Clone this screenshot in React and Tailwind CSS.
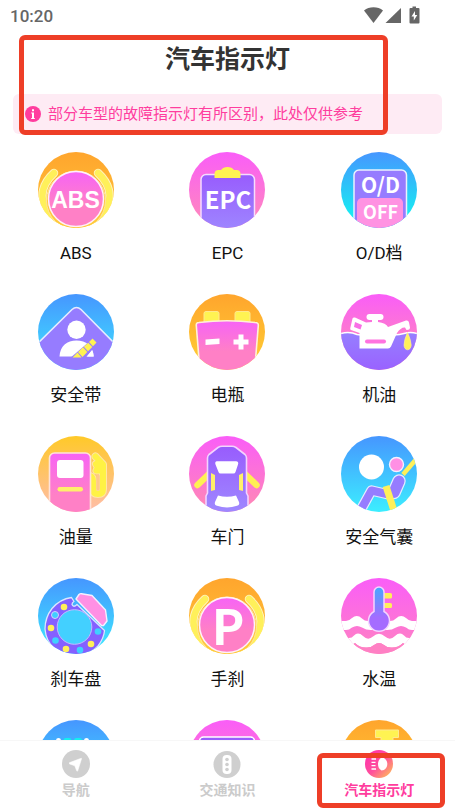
import React from "react";

const YELLOW = "#fff352";
const VIOLET = "#967cff";

function Disc({ id, from, to, children }) {
  return (
    <svg viewBox="0 0 76 76" className="size-[76px] shrink-0 overflow-visible" aria-hidden="true">
      <defs>
        <linearGradient id={`${id}-bg`} x1="0" y1="0" x2="0" y2="1">
          <stop offset="0" stopColor={from} />
          <stop offset="1" stopColor={to} />
        </linearGradient>
        <linearGradient id={`${id}-pink`} x1="0" y1="0" x2="0" y2="1">
          <stop offset="0" stopColor="#f763f6" />
          <stop offset="0.6" stopColor="#ff80c6" />
        </linearGradient>
        <linearGradient id={`${id}-violet`} x1="0" y1="0" x2="0" y2="1">
          <stop offset="0" stopColor="#985cfd" />
          <stop offset="1" stopColor="#9f8bff" />
        </linearGradient>
        <clipPath id={`${id}-clip`}>
          <circle cx="38" cy="38" r="38" />
        </clipPath>
      </defs>
      <g clipPath={`url(#${id}-clip)`}>
        <rect width="76" height="76" fill={`url(#${id}-bg)`} />
        {children}
      </g>
    </svg>
  );
}

function BrakeShoes({ id }) {
  const left = "M16 21C5 31 1 44 8 57Q12 66 22 72";
  const right = "M60 21C71 31 75 44 68 57Q64 66 54 72";
  return (
    <>
      {[left, right].map((d) => (
        <g key={d} fill="none" strokeLinecap="round">
          <path d={d} stroke="#fff3bd" strokeWidth="8.500" />
          <path d={d} stroke="#fff05a" strokeWidth="6.500" />
        </g>
      ))}
      <circle cx="38" cy="48.500" r="29.500" fill="#ffc83c" stroke="#ffe49c" strokeWidth="1" />
      <circle cx="38" cy="47" r="27.500" fill={`url(#${id}-pink)`} stroke="#fff0fa" strokeWidth="1.500" />
    </>
  );
}

function AbsIcon() {
  return (
    <Disc id="abs" from="#ffa52d" to="#ffc83a">
      <BrakeShoes id="abs" />
      <text x="37.500" y="56" textAnchor="middle" fontFamily="Liberation Sans, sans-serif" fontWeight="700" fontSize="23" fill="#fff">ABS</text>
    </Disc>
  );
}

function EpcIcon() {
  return (
    <Disc id="epc" from="#fa5df8" to="#ff8cb8">
      <rect x="12" y="22.500" width="53.500" height="62" rx="5" fill="url(#epc-violet)" stroke="#f6dcff" strokeWidth="1.500" />
      <path d="M25.500 26v-4a4 4 0 0 1 4-4h2.500q2-3 6.500-3t6.500 3h2.500a4 4 0 0 1 4 4v4z" fill={YELLOW} />
      <text x="39" y="57" textAnchor="middle" fontFamily="Noto Sans CJK SC, sans-serif" fontWeight="700" fontSize="24" fill="#fff">EPC</text>
    </Disc>
  );
}

function OverdriveIcon() {
  return (
    <Disc id="od" from="#4696ff" to="#0ffcf0">
      <rect x="13" y="18" width="52.500" height="70" rx="5" fill={VIOLET} stroke="#e9f2ff" strokeWidth="1.500" />
      <rect x="16" y="46" width="46" height="40" rx="5" fill="#ff92e2" />
      <g fontFamily="Noto Sans CJK SC, sans-serif" fontWeight="700" fill="#fff" textAnchor="middle">
        <text x="39.500" y="40.500" fontSize="21">O/D</text>
        <text x="39.500" y="66.500" fontSize="18">OFF</text>
      </g>
    </Disc>
  );
}

function SeatbeltIcon() {
  return (
    <Disc id="belt" from="#4696ff" to="#3ee8ff">
      <path d="M-2 51L34 15.500Q38.500 11.500 43 15.500L78 51V80H-2z" fill={VIOLET} stroke="#e4ecff" strokeWidth="1.600" />
      <circle cx="38.500" cy="35.800" r="9.200" fill="#fff" />
      <path d="M21.500 62.500C22 52 29 46.500 38.500 46.500S55 52 55.700 62.500z" fill="#fff" />
      <path d="M31 65L56 43.500L60 50L45.500 66z" fill={VIOLET} />
      <path d="M49 62.500L54 56Q55.500 59 55.700 62.500z" fill="#fff" />
      <path d="M34.500 63.500L39.500 58.500L43.500 63.500zM40 58L45 53.300L49.300 58L44.500 63zM45.800 52.700L50.200 48.700L54.300 53L50 57.300zM51 48L54.500 44.500L58.500 48.500L55 52.300z" fill={YELLOW} />
    </Disc>
  );
}

function BatteryIcon() {
  return (
    <Disc id="bat" from="#ffa52d" to="#ffd034">
      <g fill={YELLOW} stroke="#ffe98e" strokeWidth="1">
        <rect x="15" y="17.500" width="15" height="13" rx="2" />
        <rect x="46" y="17.500" width="15" height="13" rx="2" />
      </g>
      <path d="M10 28.500Q38 25 66 28.500Q69.500 28.500 69.300 31.500L65.500 78H11L7.300 31.500Q7 28.500 10 28.500z" fill="url(#bat-pink)" stroke="#fff0d8" strokeWidth="1.600" />
      <path d="M16.500 45.500L30.500 44.500V50L16.500 51z M49.500 40.500h5v5h5v5h-5v5h-5v-5h-5v-5h5z" fill="#fff" />
    </Disc>
  );
}

function OilIcon() {
  return (
    <Disc id="oil" from="#fa5df8" to="#ff94aa">
      <defs>
        <linearGradient id="oil-pool" x1="0" y1="0" x2="0" y2="1">
          <stop offset="0" stopColor="#967fff" />
          <stop offset="1" stopColor="#9a5fff" />
        </linearGradient>
      </defs>
      <path d="M-2 40Q8 37 16 40.500Q28 43 40 40Q56 42 63 39.500Q70 37.500 78 40V80H-2z" fill="url(#oil-pool)" stroke="#fff" strokeWidth="1.500" />
      <rect x="25.500" y="20" width="17" height="6" rx="3" fill="#fff" />
      <path d="M31 24h6v4q8 1 10 5L65 26.500Q67.500 26 68 28.500L69 33.500Q69 36 65.500 36L64 33.500Q60 33 56 39L50 52.500Q49 54.500 47 54.500H18.500V39L10 36Q8.800 35.500 9.300 34L11.500 24.500Q12 23 14 23.500L25 28.500L31 28z" fill="#fff" />
      <path d="M14 28L21 31L19.500 35.500L13 33z" fill="#f96fe6" />
      <rect x="24" y="45.500" width="21" height="4" rx="2" fill="#ff72e0" />
      <path d="M66.500 38.500Q63 46 63 51a3.600 4.800 0 0 0 7.200 0Q70 46 66.500 38.500z" fill="#fff05a" stroke="#fff1a0" strokeWidth="0.600" />
    </Disc>
  );
}

function FuelIcon() {
  return (
    <Disc id="fuel" from="#ffc928" to="#ffbdaa">
      <path d="M57.500 20.500L65 28.500V53q0 5-5 5t-5-5V45q0-4-3-5M58 28L60 31.500L58.500 34.500H63" fill="none" stroke="#ffe6a5" strokeWidth="8" strokeLinecap="round" strokeLinejoin="round" />
      <path d="M57.500 20.500L65 28.500V53q0 5-5 5t-5-5V45q0-4-3-5M58 28L60 31.500L58.500 34.500H63" fill="none" stroke="#fff244" strokeWidth="6" strokeLinecap="round" strokeLinejoin="round" />
      <path d="M60 40V53" stroke="#ffc98a" strokeWidth="3.500" strokeLinecap="round" />
      <rect x="11.500" y="17" width="41" height="70" rx="5" fill="url(#fuel-pink)" stroke="#ffe3d8" strokeWidth="1.600" />
      <rect x="19" y="24" width="26.500" height="18" rx="3" fill="#fff" />
      <rect x="19.500" y="51" width="25.500" height="4.500" rx="2.200" fill="#fff06a" />
    </Disc>
  );
}

function DoorIcon() {
  return (
    <Disc id="door" from="#fa5df8" to="#ff8ab2">
      <path d="M20 38L8.500 49M56 38L67.500 49" stroke="#fff052" strokeWidth="6.500" strokeLinecap="round" />
      <path d="M29 11.500Q31 10.300 33 10.300H43Q45 10.300 47 11.500L56 18.500Q57.500 20 57.500 22V57L59 60V80H17V60L18.500 57V22Q18.500 20 20 18.500z" fill="url(#door-violet)" stroke="#f3d3ff" strokeWidth="1.600" strokeLinejoin="round" />
      <path d="M28 25.200H47Q50 25.500 49 28.500L46.500 36Q46 38 43.500 37.500H32.500Q30 38 29.500 36L26.500 28.500Q25.500 25.500 28 25.200zM29 59.500Q38 62 47 59.500L50 66Q51 69 48 69.800Q38 73 28 69.800Q25 69 26 66z" fill="#fff" />
      <path d="M22 37L26 39V54L22 55zM54 37L50 39V54L54 55z" fill="#fff06a" />
    </Disc>
  );
}

function AirbagIcon() {
  const leg = "M17.500 78L30.500 54.500L50 59";
  const torso = "M58 45L53 56.500";
  return (
    <Disc id="bag" from="#4696ff" to="#3ceeff">
      <circle cx="30.500" cy="31" r="12.500" fill="#fff" />
      <path d="M62 38.500L78 20" stroke="#fff05a" strokeWidth="4.500" />
      <circle cx="55.500" cy="28.500" r="7" fill="#ff90e4" stroke="#f5f0ff" strokeWidth="1.400" />
      <g fill="none" stroke="#e4ecff" strokeLinejoin="round">
        <path d={leg} strokeWidth="10.500" />
        <path d={torso} strokeWidth="13.500" strokeLinecap="round" />
      </g>
      <g fill="none" stroke={VIOLET} strokeLinejoin="round">
        <path d={leg} strokeWidth="8" />
        <path d={torso} strokeWidth="11" strokeLinecap="round" />
      </g>
      <path d="M45 50L54 78" stroke="#fff05a" strokeWidth="7" />
    </Disc>
  );
}

function BrakeDiscIcon() {
  const yellow = [[26, 29], [13, 50], [28, 71], [53, 66]];
  const cyan = [[17, 37], [17.5, 62.5], [42, 72], [60, 53.5]];
  return (
    <Disc id="disc" from="#4696ff" to="#3ceeff">
      <path d="M33.500 19.500Q22 21 14 30.500Q7 39.500 7 51Q8 63 16 70Q26 79 38 78Q52 77 60 68Q66 60 66.500 52.500L39 26.500Q35.500 30 34 26.500Q34 24.500 36 23.500z" fill="#8560ff" stroke="#d9e6ff" strokeWidth="1.300" strokeLinejoin="round" />
      <circle cx="36.500" cy="49" r="17.300" fill="#43d0ff" stroke="#c6b8ff" strokeWidth="1" />
      {yellow.map(([x, y]) => <circle key={`${x}-${y}`} cx={x} cy={y} r="3.300" fill="#fff05a" />)}
      {cyan.map(([x, y]) => <circle key={`${x}-${y}`} cx={x} cy={y} r="3.300" fill="#3fd0ff" />)}
      <circle cx="17" cy="37" r="3.500" fill="none" stroke="#d5d0ff" strokeWidth="1" />
      <path d="M38 21L41 16.500Q42 15.500 43.500 15.700L54 17.500L67.500 32L69 43L65.500 47.500Q64 48 63 47z" fill="#ff90e4" stroke="#f5f0ff" strokeWidth="1.400" strokeLinejoin="round" />
    </Disc>
  );
}

function HandbrakeIcon() {
  return (
    <Disc id="park" from="#ffa52d" to="#ffc83a">
      <BrakeShoes id="park" />
      <text x="39" y="67" textAnchor="middle" fontFamily="Noto Sans CJK SC, sans-serif" fontWeight="700" fontSize="49" fill="#fff">P</text>
    </Disc>
  );
}

function CoolantIcon() {
  return (
    <Disc id="temp" from="#fa5df8" to="#ff84c0">
      <defs>
        <linearGradient id="temp-tube" x1="0" y1="0" x2="0" y2="1">
          <stop offset="0" stopColor="#45a8ff" />
          <stop offset="0.700" stopColor="#a56cff" />
        </linearGradient>
      </defs>
      <path d="M-2 43H5Q8 43 11 40Q16 36 21 40.500Q24 43.500 28 43H48Q52 43.500 55 40.500Q60 36 65 40Q68 43 71 43H78V52H71Q68 52 65 49.500Q60 46.500 55 49.500Q51 52 46 52H30Q25 52 21 49.500Q16 46.500 11 49.500Q8 52 5 52H-2z" fill="#fff" />
      <path d="M-2 60H8Q11 60 13 57.500Q17 53.500 22 58Q27 63 32 58.500Q38 53 44 58.500Q49 63 54 58Q59 53.500 63 57.500Q65 60 68 60H78V80H60L70 70L62 65Q57 70 50 69.500Q46 69.500 43 67Q38 63 33 67Q30 69.500 26 69.500Q19 70 14 65L6 70L16 80H-2z" fill="#fff" />
      <path d="M14 65Q19 70 26 69.500Q30 69.500 33 67Q38 63 43 67Q46 69.500 50 69.500Q57 70 62 65L64 67L52 80H24L12 67z" fill="#ff80c4" />
      <path d="M43 15h6.500a1.500 1.500 0 0 1 1.500 1.500v2.500a1.500 1.500 0 0 1-1.500 1.500H43zM43 25h6.500a1.500 1.500 0 0 1 1.500 1.500v2a1.500 1.500 0 0 1-1.500 1.500H43z" fill="#fff05a" />
      <path d="M33 14a5 5 0 0 1 10 0V33.500a10.500 10.500 0 1 1-10 0z" fill="url(#temp-tube)" stroke="#f5d5ff" strokeWidth="1.500" />
    </Disc>
  );
}

function SuspensionIcon() {
  return (
    <Disc id="susp" from="#4696ff" to="#3ceeff">
      <g strokeLinecap="round" strokeWidth="5">
        <path d="M20.500 20.500V30M48.500 20.500V30" stroke="#fff" />
        <path d="M28 20.500h3M38.500 20.500h3" stroke="#12f0f0" />
      </g>
    </Disc>
  );
}

function DisplayIcon() {
  return (
    <Disc id="disp" from="#fa5df8" to="#ff8ab2">
      <rect x="10.500" y="17" width="55" height="50" rx="4" fill="url(#disp-violet)" stroke="#fff" strokeWidth="1.500" />
    </Disc>
  );
}

function EngineIcon() {
  return (
    <Disc id="eng" from="#ffa52d" to="#ffd034">
      <path d="M34.500 10h23v7.500H52V22H40v-4.500h-5.500z" fill={YELLOW} stroke="#ffe98e" strokeWidth="1" />
    </Disc>
  );
}

const lights = [
  { label: "ABS", Icon: AbsIcon },
  { label: "EPC", Icon: EpcIcon },
  { label: "O/D档", Icon: OverdriveIcon },
  { label: "安全带", Icon: SeatbeltIcon },
  { label: "电瓶", Icon: BatteryIcon },
  { label: "机油", Icon: OilIcon },
  { label: "油量", Icon: FuelIcon },
  { label: "车门", Icon: DoorIcon },
  { label: "安全气囊", Icon: AirbagIcon },
  { label: "刹车盘", Icon: BrakeDiscIcon },
  { label: "手刹", Icon: HandbrakeIcon },
  { label: "水温", Icon: CoolantIcon },
  { Icon: SuspensionIcon },
  { Icon: DisplayIcon },
  { Icon: EngineIcon },
];

function StatusBar() {
  return (
    <div className="flex h-8 shrink-0 items-center justify-between pr-[35px] pl-2.5 text-[#666]">
      <span className="text-[17px] leading-5 font-medium">10:20</span>
      <svg viewBox="0 0 56 20" className="h-5 w-14" fill="currentColor" aria-hidden="true">
        <path d="M0 4.500Q4 1.300 9.500 1.300T19 4.500L9.500 17z" />
        <path d="M37 2V17H21.500z" />
        <path fillRule="evenodd" d="M48.500 0.500h3.500v1.500h2.500q1 0 1 1V16.500q0 1-1 1h-8q-1 0-1-1V3q0-1 1-1h2zM51 5L47.500 10.500h2.300V14.500L53.300 9H51z" />
      </svg>
    </div>
  );
}

function NavArrow() {
  return (
    <svg viewBox="0 0 28 28" className="size-7" aria-hidden="true">
      <circle cx="14" cy="14" r="14" fill="#cfcfcf" />
      <path d="M19.500 8.800L15.800 20.500Q15.300 22 14.600 20.500L12.800 15.800L7.800 14Q6.300 13.300 7.800 12.600L18.600 8.500Q19.800 8 19.500 8.800z" fill="#fff" stroke="#fff" strokeWidth="0.600" strokeLinejoin="round" />
    </svg>
  );
}

function NavSignal() {
  return (
    <svg viewBox="0 0 28 28" className="size-7" aria-hidden="true">
      <circle cx="14" cy="14.500" r="13.500" fill="#cfcfcf" />
      <rect x="9.500" y="5" width="9" height="19" rx="4" fill="#fff" />
      <g fill="#cfcfcf">
        <circle cx="14" cy="9.500" r="1.800" />
        <circle cx="14" cy="14.500" r="1.800" />
        <circle cx="14" cy="19.500" r="1.800" />
      </g>
    </svg>
  );
}

function NavLamp() {
  return (
    <svg viewBox="0 0 28 28" className="size-7" aria-hidden="true">
      <defs>
        <linearGradient id="nav-lamp" x1="0.200" y1="0.200" x2="0.900" y2="0.900">
          <stop offset="0" stopColor="#ff3aa8" />
          <stop offset="0.450" stopColor="#ff4f9c" />
          <stop offset="1" stopColor="#ffb45e" />
        </linearGradient>
      </defs>
      <circle cx="14" cy="14" r="14" fill="url(#nav-lamp)" />
      <path d="M6.500 9h4.500M6.500 12.300h4M6.500 15.700h4M6.500 19h4.500" stroke="#fff" strokeWidth="1.300" />
      <path d="M16.500 7.500C20 7.500 22.300 10.500 22.300 14S20 20.500 16.500 20.500Q13 18.500 13 14T16.500 7.500z" fill="#fff" />
    </svg>
  );
}

const tabs = [
  { label: "导航", Icon: NavArrow },
  { label: "交通知识", Icon: NavSignal },
  { label: "汽车指示灯", Icon: NavLamp, active: true },
];

export default function App() {
  return (
    <div className="relative flex h-screen flex-col overflow-hidden bg-white font-[Roboto,'Noto_Sans_CJK_SC',sans-serif]">
      <StatusBar />
      <header className="mb-1.5 flex h-14 shrink-0 items-center justify-center">
        <h1 className="text-[25px] leading-9 font-bold text-[#333]">汽车指示灯</h1>
      </header>
      <p className="mx-[13px] flex h-10 shrink-0 items-center gap-[7px] rounded-md bg-[#feebf4] pl-3 text-[15px] text-[#ff3d9e]">
        <svg viewBox="0 0 16 16" className="size-4 shrink-0" aria-hidden="true">
          <circle cx="8" cy="8" r="8" fill="#ff3d9e" />
          <path d="M7 3.200h2v2H7zM6.200 6.500H9v5.500h.8v1H6.200v-1H7V7.500h-.8z" fill="#fff" />
        </svg>
        部分车型的故障指示灯有所区别，此处仅供参考
      </p>
      <main className="min-h-0 flex-1 overflow-hidden pt-[18px]">
        <ul className="grid auto-rows-[142px] grid-cols-3">
          {lights.map(({ label, Icon }, i) => (
            <li key={i} className="flex flex-col items-center gap-[11px]">
              <Icon />
              {label && <span className="text-[17px] leading-7 text-[#111]">{label}</span>}
            </li>
          ))}
        </ul>
      </main>
      <nav className="grid h-[69px] shrink-0 grid-cols-3 border-t border-[#f7f7f7] bg-white">
        {tabs.map(({ label, Icon, active }) => (
          <button
            key={label}
            type="button"
            className={`flex flex-col items-center gap-0.5 pt-[9px] text-sm leading-5 font-bold ${active ? "text-[#ff3d9e]" : "text-[#cbcbcb]"}`}
          >
            <Icon />
            {label}
          </button>
        ))}
      </nav>
      <div className="pointer-events-none absolute top-[35px] right-[67px] left-[19px] h-[100px] rounded-md border-5 border-[#ee3e27]" />
      <div className="pointer-events-none absolute right-[10px] bottom-px h-[55px] w-[128px] rounded-md border-5 border-[#ee3e27]" />
    </div>
  );
}
